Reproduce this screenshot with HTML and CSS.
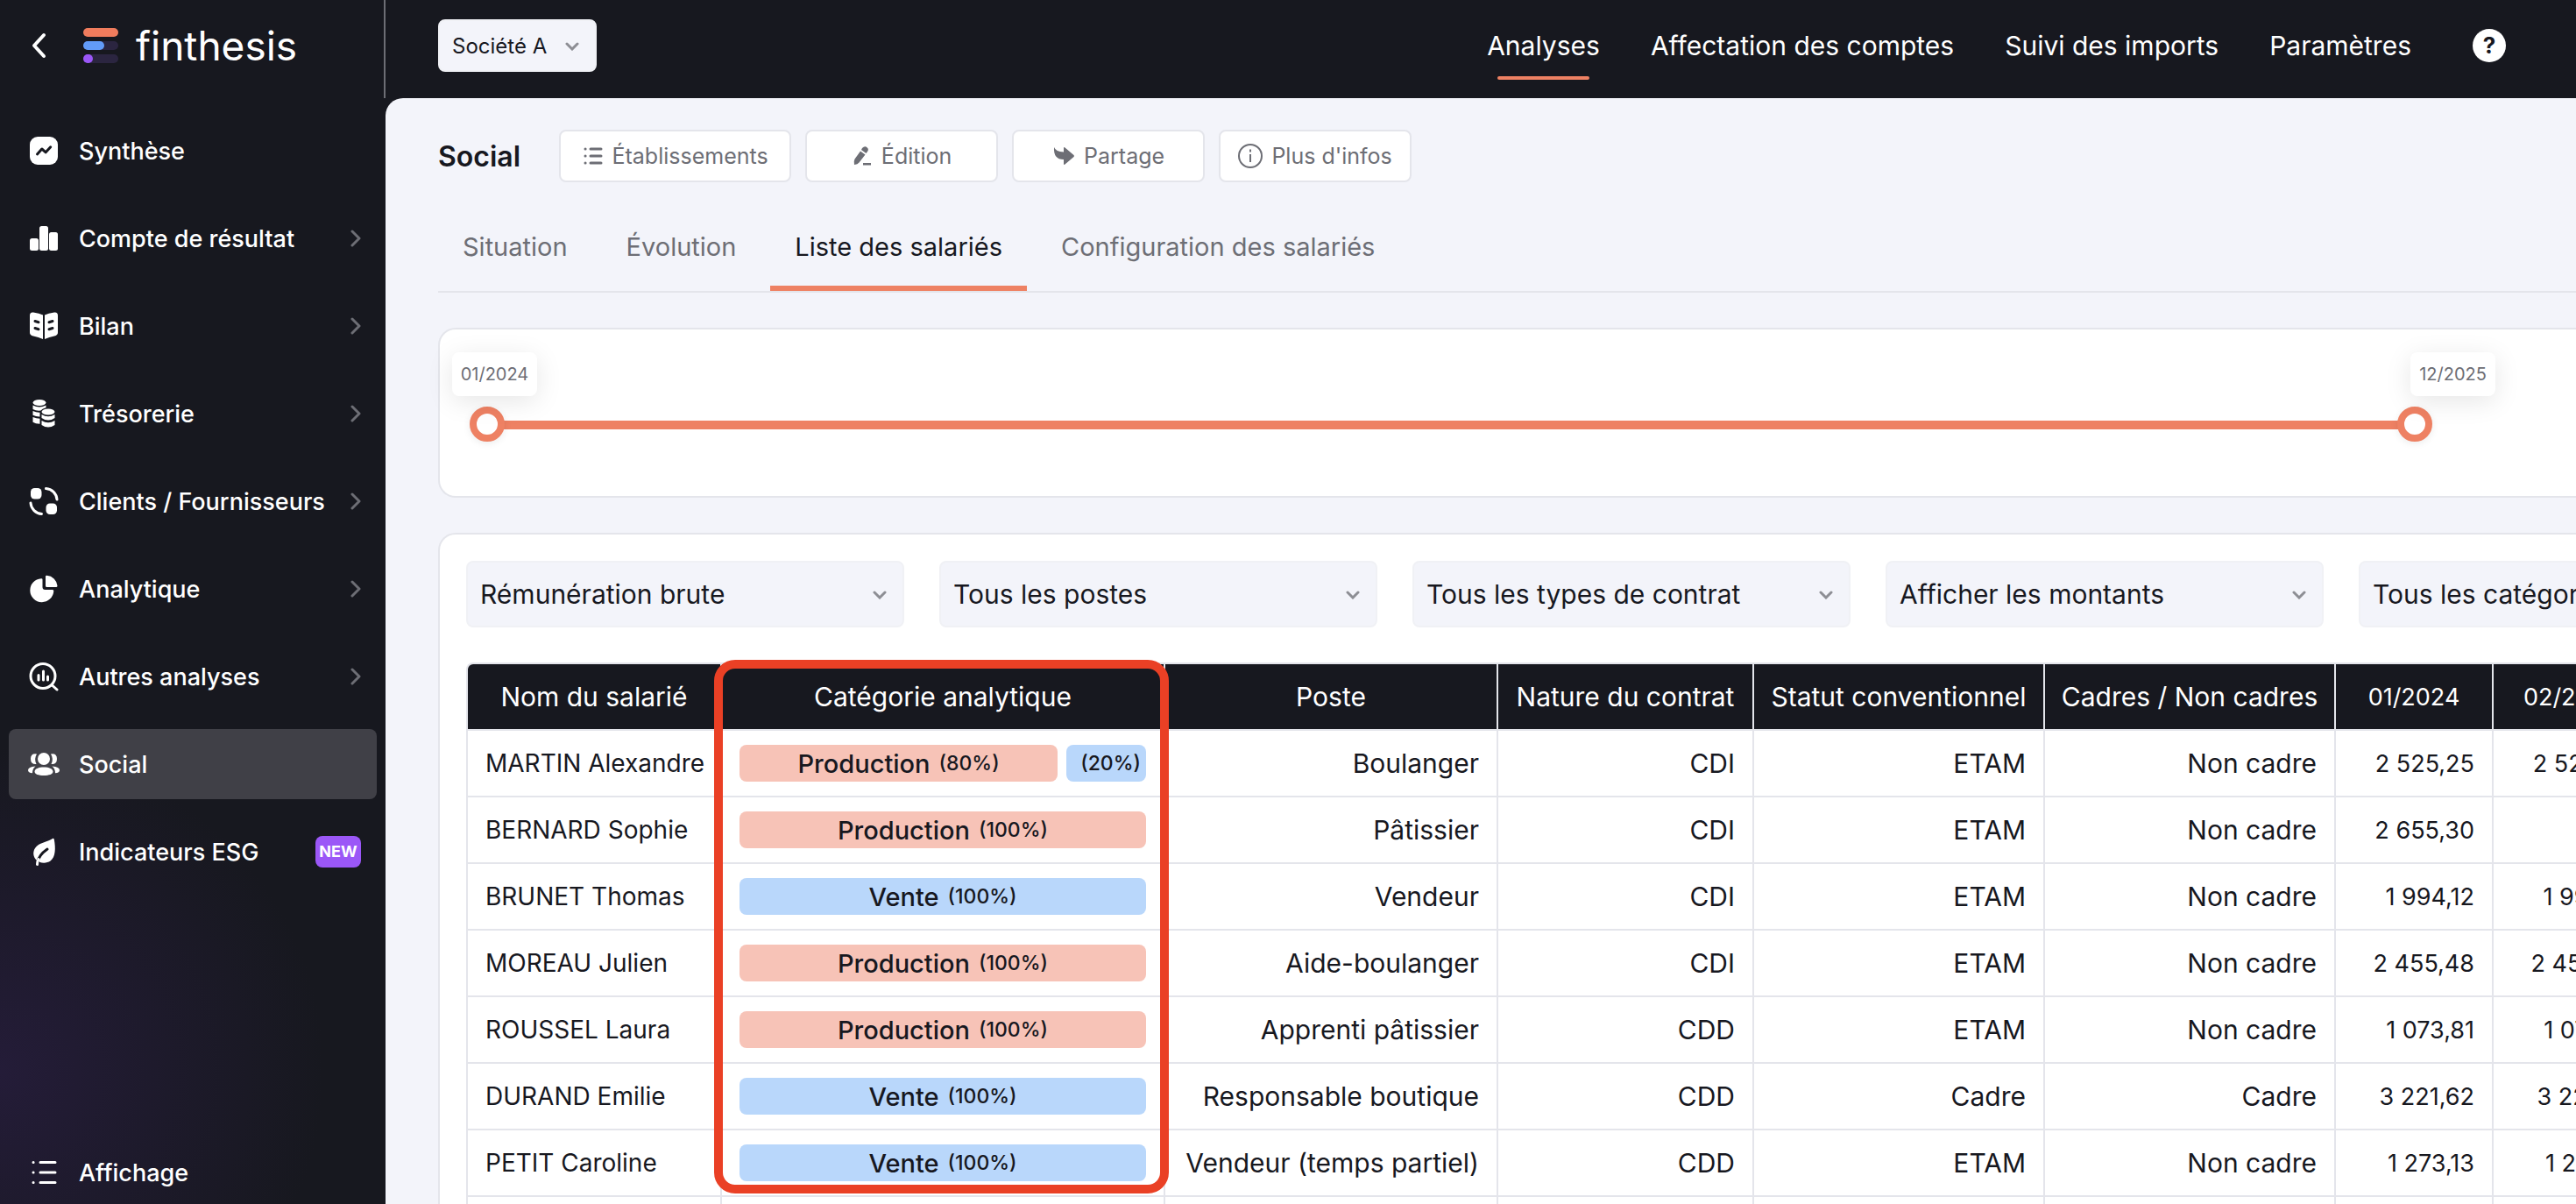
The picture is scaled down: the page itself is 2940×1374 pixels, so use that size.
FILE: index.html
```html
<!DOCTYPE html>
<html lang="fr">
<head>
  <meta charset="UTF-8" />
  <meta name="viewport" content="width=device-width, initial-scale=1.0"/>
  <title>Finthesis - Social</title>
  <link rel="stylesheet" href="styles.css">
</head>
<body>

  <aside class="sidebar">
    <div class="brand">
      <button class="back" aria-label="Retour">
        <svg width="20" height="30" viewBox="0 0 20 30"><path d="M16 3 5 15l11 12" fill="none" stroke="#fff" stroke-width="4" stroke-linecap="round" stroke-linejoin="round"/></svg>
      </button>
      <a class="logo" href="#">
        <svg width="40" height="40" viewBox="0 0 40 40">
          <rect width="40" height="10" rx="5" fill="#f07c5d"/>
          <rect y="15" width="40" height="10" rx="5" fill="#2b2540"/>
          <rect y="15" width="24" height="10" rx="5" fill="#629bf8"/>
          <rect y="30" width="40" height="10" rx="5" fill="#2b2540"/>
          <rect y="30" width="11" height="10" rx="5" fill="#9b57f7"/>
        </svg>
        <span>finthesis</span>
      </a>
    </div>

    <nav class="menu">
      <a href="#">
        <svg class="icon" viewBox="0 0 36 36"><rect x="2" y="2" width="32" height="32" rx="9"/><path class="cut" d="m10.5 22 5.3-6 4.4 3.8 5.5-6"/></svg>
        <span>Synthèse</span>
      </a>
      <a href="#">
        <svg class="icon" viewBox="0 0 36 36"><rect x="2" y="18" width="10" height="14" rx="2.500"/><rect x="13" y="4" width="10" height="28" rx="2.500"/><rect x="24" y="11" width="10" height="21" rx="2.500"/></svg>
        <span>Compte de résultat</span>
        <svg class="arrow" viewBox="0 0 12 20"><path d="m2 2 8 8-8 8"/></svg>
      </a>
      <a href="#">
        <svg class="icon" viewBox="0 0 36 36"><path d="M2 6q0-4 4-3.500 7 .8 11 3v27.500q-5-2.500-11-3.500-4-.8-4-4zM34 6q0-4-4-3.500-7 .8-11 3v27.500q5-2.500 11-3.500 4-.8 4-4z"/><path class="cut" d="m8 12.500 4 1.200M8 20.500l4 1.200m16-9.200-4 1.200m4 6.800-4 1.200"/></svg>
        <span>Bilan</span>
        <svg class="arrow" viewBox="0 0 12 20"><path d="m2 2 8 8-8 8"/></svg>
      </a>
      <a href="#">
        <svg class="icon" viewBox="0 0 36 36"><ellipse cx="13" cy="5.500" rx="7.500" ry="3.500"/><path d="M5.500 8.500q7.500 4 15 0v2.700q-4 .8-6 3.300-5 .6-9-1.500zM5.500 15q4 2 8 1.800v4.700q-4 .2-8-1.700zM5.500 22q4 1.800 8 1.800v6q-5 0-8-2z"/><ellipse cx="23" cy="16" rx="7.500" ry="3.500"/><path d="M15.500 19q7.500 4.500 15 0v4q-7.500 5-15 0zM15.500 26q7.500 4.500 15 0v5q-7.500 5-15 0z"/></svg>
        <span>Trésorerie</span>
        <svg class="arrow" viewBox="0 0 12 20"><path d="m2 2 8 8-8 8"/></svg>
      </a>
      <a href="#">
        <svg class="icon" viewBox="0 0 36 36"><rect x="3" y="3" width="12.500" height="12.500" rx="4.500"/><rect x="20.500" y="20.500" width="12.500" height="12.500" rx="4.500"/><path class="line" d="M20.500 3.500A13.500 13.500 0 0 1 33 16M3 20a13.500 13.500 0 0 0 12.500 12.500"/></svg>
        <span>Clients / Fournisseurs</span>
        <svg class="arrow" viewBox="0 0 12 20"><path d="m2 2 8 8-8 8"/></svg>
      </a>
      <a href="#">
        <svg class="icon" viewBox="0 0 36 36"><path d="M16.500 7.500V16q0 3 3 3H28q1.500 0 1.300 1.500A13.500 13.500 0 1 1 15 6.200q1.500-.2 1.500 1.300z"/><path d="M20 4q0-1.500 1.500-1.300a13 13 0 0 1 12 11.800q0 1.500-1.500 1.500H21.500Q20 16 20 14.500z"/></svg>
        <span>Analytique</span>
        <svg class="arrow" viewBox="0 0 12 20"><path d="m2 2 8 8-8 8"/></svg>
      </a>
      <a href="#">
        <svg class="icon" viewBox="0 0 36 36"><path class="line" d="M31 17.500a14 14 0 1 1-28 0 14 14 0 0 1 28 0zM27.500 28l5.500 5M12 16.500v5.500M17.500 12v10M22.500 18v4"/></svg>
        <span>Autres analyses</span>
        <svg class="arrow" viewBox="0 0 12 20"><path d="m2 2 8 8-8 8"/></svg>
      </a>
      <a href="#" class="active">
        <svg class="icon" viewBox="0 0 36 36"><circle cx="18" cy="12" r="7"/><path d="M18 21.500c6 0 10.500 2 10.500 5s-4.500 4.500-10.500 4.500S7.500 29.500 7.500 26.500s4.500-5 10.500-5zM10 6.500Q3 5.500 3 12t6.500 6q-3-6 .5-11.500zM26 6.500q7-1 7 5.500t-6.500 6q3-6-.5-11.500zM8.500 20.500Q0 21 0 25q0 3 5 3.300 0-5 3.500-7.800zM27.500 20.500Q36 21 36 25q0 3-5 3.300 0-5-3.500-7.800z"/></svg>
        <span>Social</span>
      </a>
      <a href="#">
        <svg class="icon" viewBox="0 0 36 36"><path d="M28 3q1.500-.6 1.800 1c1.800 10 1.700 20-4.300 24.500-5 3.500-13 2.500-16.500-1.500C4.500 22 5.500 14 12 10c5-3 10-3.500 16-7z"/><path class="cut" d="M11 30q1-8 11-15"/><path class="line" d="M10.500 32.500q-.2-3 1.500-6"/></svg>
        <span>Indicateurs ESG</span>
        <span class="badge">NEW</span>
      </a>
    </nav>

    <nav class="menu menu-bottom">
      <a href="#">
        <svg class="icon" viewBox="0 0 36 36"><path class="line" d="M14 6.500h17M14 18h17M14 29.500h17M6 6.500h.1M6 18h.1M6 29.500h.1"/></svg>
        <span>Affichage</span>
      </a>
    </nav>
  </aside>

  <div class="page">
    <header class="topbar">
      <div class="select company">
        <select aria-label="Société"><option>Société A</option></select>
        <svg viewBox="0 0 16 10"><path d="m2 2 6 6 6-6"/></svg>
      </div>
      <nav class="topnav">
        <a href="#" class="active">Analyses</a>
        <a href="#">Affectation des comptes</a>
        <a href="#">Suivi des imports</a>
        <a href="#">Paramètres</a>
        <button class="help" aria-label="Aide">?</button>
      </nav>
    </header>

    <main>
      <div class="title-row">
        <h1>Social</h1>
        <button class="wide">
          <svg width="24" height="24" viewBox="0 0 24 24"><path d="M9 4h12M9 12h12M9 20h12M3 4h.1M3 12h.1M3 20h.1" fill="none" stroke="currentColor" stroke-width="3" stroke-linecap="round"/></svg>
          Établissements
        </button>
        <button>
          <svg width="24" height="24" viewBox="0 0 24 24" fill="currentColor"><path d="M12 3q3-3 5.500-.8T18 7l-1.500 2-5.500-4zM10 6.500l5.500 4-7 9q-1.500 2-5.500 2.500-1-4 .5-6.500zM13 20h9v2.500h-9z"/></svg>
          Édition
        </button>
        <button>
          <svg width="26" height="24" viewBox="0 0 26 24" fill="currentColor"><path d="M2 2q2 5 11 5.500V3q0-1.500 1.500-.5l10 8.500q1 1 0 2l-10 8.500q-1.500 1-1.500-.5v-5Q1 16 2 2z"/></svg>
          Partage
        </button>
        <button>
          <svg width="28" height="28" viewBox="0 0 28 28" fill="none" stroke="currentColor" stroke-width="2"><circle cx="14" cy="14" r="13"/><path d="M14 12v9M14 6.500v3"/></svg>
          Plus d'infos
        </button>
      </div>

      <nav class="tabs">
        <a href="#">Situation</a>
        <a href="#">Évolution</a>
        <a href="#" class="active">Liste des salariés</a>
        <a href="#">Configuration des salariés</a>
      </nav>

      <section class="card period">
        <div class="range">
          <div class="track"></div>
          <input type="range" id="start" min="0" max="23" value="0">
          <input type="range" id="end" min="0" max="23" value="23">
          <label class="tip tip-start" for="start">01/2024</label>
          <label class="tip tip-end" for="end">12/2025</label>
        </div>
      </section>

      <section class="card list">
        <div class="filters">
          <div class="select">
            <select aria-label="Rémunération"><option>Rémunération brute</option></select>
            <svg viewBox="0 0 16 10"><path d="m2 2 6 6 6-6"/></svg>
          </div>
          <div class="select">
            <select aria-label="Postes"><option>Tous les postes</option></select>
            <svg viewBox="0 0 16 10"><path d="m2 2 6 6 6-6"/></svg>
          </div>
          <div class="select">
            <select aria-label="Types de contrat"><option>Tous les types de contrat</option></select>
            <svg viewBox="0 0 16 10"><path d="m2 2 6 6 6-6"/></svg>
          </div>
          <div class="select">
            <select aria-label="Affichage"><option>Afficher les montants</option></select>
            <svg viewBox="0 0 16 10"><path d="m2 2 6 6 6-6"/></svg>
          </div>
          <div class="select">
            <select aria-label="Catégories"><option>Tous les catégories</option></select>
            <svg viewBox="0 0 16 10"><path d="m2 2 6 6 6-6"/></svg>
          </div>
        </div>

        <div class="table-wrap">
          <table>
            <colgroup>
              <col class="c-name"><col class="c-category"><col class="c-job"><col class="c-contract">
              <col class="c-status"><col class="c-status"><col class="c-month"><col class="c-month">
            </colgroup>
            <thead>
              <tr>
                <th>Nom du salarié</th>
                <th>Catégorie analytique</th>
                <th>Poste</th>
                <th>Nature du contrat</th>
                <th>Statut conventionnel</th>
                <th>Cadres / Non cadres</th>
                <th class="num">01/2024</th>
                <th class="num">02/2024</th>
              </tr>
            </thead>
            <tbody>
              <tr>
                <td>MARTIN Alexandre</td>
                <td><div class="split"><span class="pill prod" style="flex-grow: 80">Production <small>(80%)</small></span><span class="pill sale" style="flex-grow: 20"><small>(20%)</small></span></div></td>
                <td>Boulanger</td><td>CDI</td><td>ETAM</td><td>Non cadre</td>
                <td class="num">2 525,25</td><td class="num">2 525,25</td>
              </tr>
              <tr>
                <td>BERNARD Sophie</td>
                <td><div class="split"><span class="pill prod" style="flex-grow: 100">Production <small>(100%)</small></span></div></td>
                <td>Pâtissier</td><td>CDI</td><td>ETAM</td><td>Non cadre</td>
                <td class="num">2 655,30</td><td class="num"></td>
              </tr>
              <tr>
                <td>BRUNET Thomas</td>
                <td><div class="split"><span class="pill sale" style="flex-grow: 100">Vente <small>(100%)</small></span></div></td>
                <td>Vendeur</td><td>CDI</td><td>ETAM</td><td>Non cadre</td>
                <td class="num">1 994,12</td><td class="num">1 994,12</td>
              </tr>
              <tr>
                <td>MOREAU Julien</td>
                <td><div class="split"><span class="pill prod" style="flex-grow: 100">Production <small>(100%)</small></span></div></td>
                <td>Aide-boulanger</td><td>CDI</td><td>ETAM</td><td>Non cadre</td>
                <td class="num">2 455,48</td><td class="num">2 455,48</td>
              </tr>
              <tr>
                <td>ROUSSEL Laura</td>
                <td><div class="split"><span class="pill prod" style="flex-grow: 100">Production <small>(100%)</small></span></div></td>
                <td>Apprenti pâtissier</td><td>CDD</td><td>ETAM</td><td>Non cadre</td>
                <td class="num">1 073,81</td><td class="num">1 073,81</td>
              </tr>
              <tr>
                <td>DURAND Emilie</td>
                <td><div class="split"><span class="pill sale" style="flex-grow: 100">Vente <small>(100%)</small></span></div></td>
                <td>Responsable boutique</td><td>CDD</td><td>Cadre</td><td>Cadre</td>
                <td class="num">3 221,62</td><td class="num">3 221,62</td>
              </tr>
              <tr>
                <td>PETIT Caroline</td>
                <td><div class="split"><span class="pill sale" style="flex-grow: 100">Vente <small>(100%)</small></span></div></td>
                <td>Vendeur (temps partiel)</td><td>CDD</td><td>ETAM</td><td>Non cadre</td>
                <td class="num">1 273,13</td><td class="num">1 273,13</td>
              </tr>
              <tr><td></td><td></td><td></td><td></td><td></td><td></td><td></td><td></td></tr>
            </tbody>
          </table>
          <div class="highlight"></div>
        </div>
      </section>
    </main>
  </div>

</body>
</html>
```
FILE: styles.css
```css
* {
  box-sizing: border-box;
}
body {
  margin: 0;
  display: flex;
  height: 100vh;
  overflow: hidden;
  background: #17181f;
  color: #17181f;
  font-family: Inter, sans-serif;
  font-size: 30px;
}
a {
  color: inherit;
  text-decoration: none;
}
button, select {
  font-family: inherit;
  color: inherit;
  cursor: pointer;
}

/* sidebar */
.sidebar {
  flex: 0 0 440px;
  display: flex;
  flex-direction: column;
  color: #fff;
  background: radial-gradient(circle at 0 89%, #241c38 0, #17181f 370px);
}
.brand {
  display: flex;
  align-items: center;
  gap: 41px;
  height: 112px;
  padding: 0 0 8px 34px;
  border-right: 2px solid #6d6e75;
}
.back {
  display: flex;
  padding: 0;
  border: none;
  background: none;
}
.logo {
  display: flex;
  align-items: center;
  gap: 20px;
  font-size: 46px;
}
.menu {
  display: flex;
  flex-direction: column;
  gap: 20px;
  padding: 20px 10px;
  font-size: 27px;
  font-weight: 500;
  white-space: nowrap;
}
.menu a {
  display: flex;
  align-items: center;
  gap: 22px;
  height: 80px;
  padding: 0 18px 0 22px;
  border-radius: 8px;
}
.menu a.active {
  background: #404047;
}
.menu-bottom {
  margin-top: auto;
  padding-bottom: 0;
}
.menu-bottom a {
  height: 72px;
}
.icon {
  flex-shrink: 0;
  width: 36px;
  height: 36px;
  fill: #fff;
}
.icon .cut, .icon .line {
  fill: none;
  stroke: #17181f;
  stroke-width: 3;
  stroke-linecap: round;
  stroke-linejoin: round;
}
.icon .line {
  stroke: #fff;
}
.arrow {
  flex-shrink: 0;
  width: 12px;
  height: 20px;
  margin-left: auto;
  fill: none;
  stroke: #6d6e75;
  stroke-width: 3;
  stroke-linecap: round;
  stroke-linejoin: round;
}
.badge {
  margin-left: auto;
  width: 52px;
  border-radius: 8px;
  background: #9b57f7;
  font-size: 18px;
  font-weight: 700;
  line-height: 36px;
  text-align: center;
}

/* top bar */
.page {
  flex: 1;
  min-width: 0;
  display: flex;
  flex-direction: column;
}
.topbar {
  display: flex;
  align-items: center;
  justify-content: space-between;
  height: 112px;
  padding: 0 80px 8px 60px;
}
.topnav {
  display: flex;
  align-items: center;
  gap: 58px;
  color: #fff;
}
.topnav a {
  position: relative;
  line-height: 40px;
}
.topnav a.active::after {
  content: "";
  position: absolute;
  top: 55px;
  left: 12px;
  right: 12px;
  height: 4px;
  border-radius: 2px;
  background: #ee8163;
}
.help {
  width: 38px;
  height: 38px;
  margin-left: 12px;
  padding: 0;
  border: none;
  border-radius: 50%;
  background: #fff;
  color: #17181f;
  font-size: 26px;
  font-weight: 700;
  line-height: 38px;
}

/* drop-downs */
.select {
  position: relative;
}
.select select {
  appearance: none;
  width: 100%;
  height: 76px;
  padding: 0 46px 0 14px;
  border: 2px solid #f0f1f5;
  border-radius: 8px;
  background: #f3f4fa;
  font-size: 30px;
}
.select svg {
  position: absolute;
  top: 50%;
  right: 20px;
  width: 16px;
  height: 10px;
  margin-top: -4px;
  fill: none;
  stroke: #8d8e94;
  stroke-width: 3;
  stroke-linecap: round;
  pointer-events: none;
}
.company {
  width: 181px;
}
.company select {
  height: 60px;
  font-size: 24px;
}

/* content */
main {
  flex: 1;
  min-height: 0;
  overflow: hidden;
  padding: 36px 0 0 60px;
  border-top-left-radius: 20px;
  background: #f3f4fa;
}
.title-row {
  display: flex;
  align-items: center;
  gap: 16px;
}
.title-row h1 {
  margin: 0 28px 0 0;
  font-size: 32px;
  font-weight: 600;
}
.title-row button {
  display: flex;
  align-items: center;
  justify-content: center;
  gap: 10px;
  min-width: 220px;
  height: 60px;
  padding: 0 16px;
  border: 2px solid #e4e5eb;
  border-radius: 8px;
  background: #fff;
  color: #6d6e75;
  font-size: 25px;
}
.title-row .wide {
  min-width: 265px;
}
.tabs {
  display: flex;
  gap: 11px;
  margin-top: 24px;
  border-bottom: 2px solid #e4e5eb;
  color: #6d6e75;
  font-size: 29px;
}
.tabs a {
  padding: 6px 28px 0;
  border-bottom: 6px solid transparent;
  line-height: 88px;
}
.tabs a.active {
  border-color: #ee8163;
  color: #17181f;
}
.card {
  margin-top: 40px;
  border: 2px solid #e4e5eb;
  border-right: none;
  border-radius: 20px 0 0 20px;
  background: #fff;
}

/* period slider */
.period {
  padding: 88px 164px 62px 34px;
}
.range {
  position: relative;
  height: 40px;
}
.track {
  position: absolute;
  top: 16px;
  left: 20px;
  right: 20px;
  height: 10px;
  background: #ee8163;
}
.range input {
  appearance: none;
  position: absolute;
  width: 100%;
  height: 40px;
  margin: 0;
  background: none;
  pointer-events: none;
}
.range input::-webkit-slider-thumb {
  appearance: none;
  width: 40px;
  height: 40px;
  border: 8px solid #ee8163;
  border-radius: 50%;
  background: #fff;
  box-shadow: 0 2px 8px rgba(0,0,0,0.08);
  pointer-events: auto;
}
.tip {
  position: absolute;
  bottom: 52px;
  width: 97px;
  border-radius: 8px;
  background: #fff;
  box-shadow: 0 6px 30px rgba(0,0,0,0.1);
  color: #6d6e75;
  font-size: 20px;
  line-height: 50px;
  text-align: center;
}
.tip-start {
  left: -20px;
}
.tip-end {
  right: -72px;
}

/* employees */
.list {
  padding: 30px 0 40px 30px;
}
.filters {
  display: flex;
  gap: 40px;
  overflow: hidden;
}
.filters .select {
  flex: 0 0 500px;
}
.table-wrap {
  position: relative;
  margin-top: 40px;
}
table {
  table-layout: fixed;
  width: 2494px;
  border: 2px solid #e4e5eb;
  border-width: 2px 0 0 2px;
  border-radius: 8px 0 0 0;
  border-spacing: 0;
  overflow: hidden;
}
.c-name { width: 290px; }
.c-category { width: 506px; }
.c-job { width: 380px; }
.c-contract { width: 292px; }
.c-status { width: 332px; }
.c-month { width: 180px; }
th, td {
  height: 76px;
  padding: 0 20px;
  border-right: 2px solid #e4e5eb;
  border-bottom: 2px solid #e4e5eb;
  text-align: right;
  white-space: nowrap;
}
th {
  padding: 0;
  background: #17181f;
  color: #fff;
  font-weight: 400;
  text-align: center;
}
td:first-child {
  padding-right: 0;
  font-size: 28px;
  text-align: left;
}
.num {
  font-size: 27px;
}
.split {
  display: flex;
  gap: 10px;
}
.pill {
  display: flex;
  flex-basis: 0;
  align-items: center;
  justify-content: center;
  height: 42px;
  border-radius: 8px;
  font-size: 29px;
  font-weight: 500;
}
.pill small {
  margin-left: 10px;
  font-size: 23px;
}
.prod { background: #f7c3b7; }
.sale { background: #b9d7fb; }

/* frame round the category column */
.highlight {
  position: absolute;
  top: -3px;
  left: 283px;
  width: 519px;
  height: 609px;
  border: 10px solid #ea4025;
  border-radius: 24px;
}
```
